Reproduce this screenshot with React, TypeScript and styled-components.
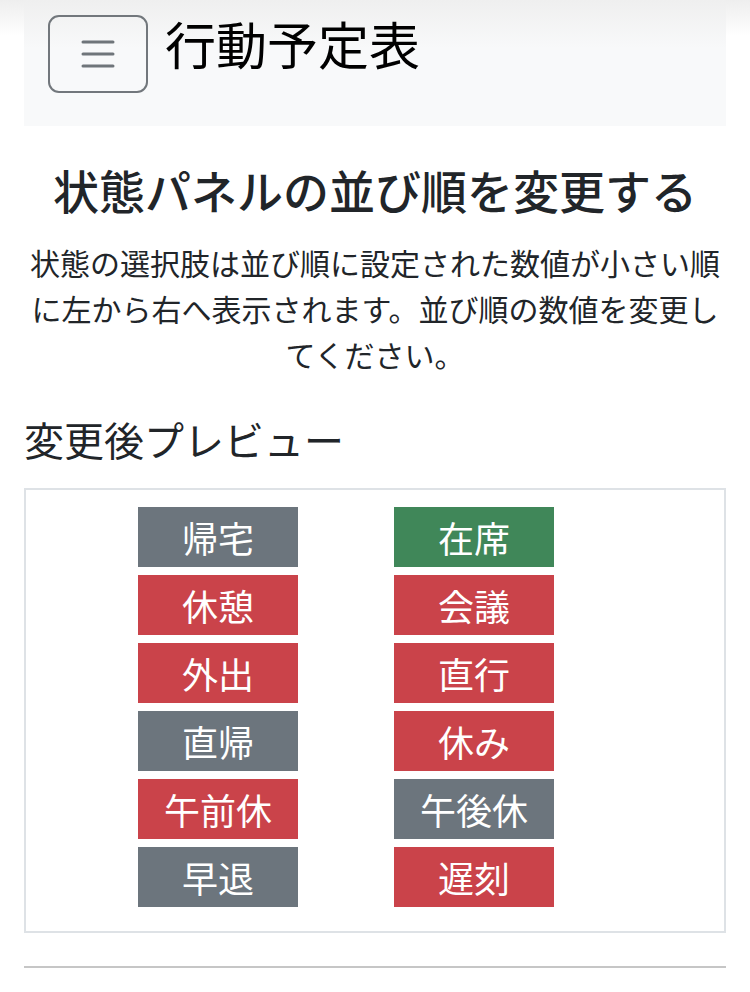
import styled, { createGlobalStyle } from "styled-components";

const GlobalStyle = createGlobalStyle`
  html, body {
    margin: 0;
    padding: 0;
  }
  body {
    background: linear-gradient(to bottom, #eeeeee 0, #ffffff 36px) no-repeat;
    color: #212529;
    font-family: "Noto Sans CJK JP", "Noto Sans", sans-serif;
  }
`;

type Variant = "secondary" | "danger" | "success";

const colors: Record<Variant, string> = {
  secondary: "#6c757d",
  danger: "#ca434a",
  success: "#408759",
};

const Page = styled.div`
  padding: 0 24px;
`;

const Navbar = styled.nav`
  display: flex;
  align-items: flex-start;
  gap: 17px;
  height: 126px;
  box-sizing: border-box;
  padding: 15px 24px 0;
  background: linear-gradient(to bottom, #efefef 0, #f8f9fa 48px);
`;

const Toggler = styled.button`
  display: flex;
  align-items: center;
  justify-content: center;
  width: 100px;
  height: 78px;
  padding: 0;
  background: transparent;
  border: 2px solid #72777c;
  border-radius: 11px;
`;

const Brand = styled.span`
  margin-top: -2px;
  font-size: 51px;
  line-height: 60px;
  color: #000;
`;

const Title = styled.h1`
  margin: 36px 0 0;
  font-size: 46px;
  line-height: 54px;
  font-weight: 500;
  text-align: center;
`;

const Lead = styled.p`
  margin: 23px 0 0;
  font-size: 30px;
  line-height: 46px;
  text-align: center;
`;

const SubTitle = styled.h2`
  margin: 38px 0 0;
  font-size: 40px;
  line-height: 48px;
  font-weight: 400;
`;

const PreviewBox = styled.div`
  margin-top: 25px;
  border: 2px solid #dee2e6;
  padding: 17px 0 16px;
`;

const Columns = styled.div`
  display: grid;
  grid-template-columns: 256px 256px;
  margin-left: 64px;
`;

const Column = styled.div`
  display: flex;
  flex-direction: column;
  align-items: center;
  gap: 8px;
  padding-bottom: 8px;
`;

const Badge = styled.div<{ $variant: Variant }>`
  width: 160px;
  height: 60px;
  display: flex;
  align-items: center;
  justify-content: center;
  background: ${(p) => colors[p.$variant]};
  color: #fff;
  font-size: 36px;
  line-height: 1;
`;

const Rule = styled.hr`
  margin: 33px 0 0;
  border: 0;
  border-top: 2px solid #c6c6c6;
`;

const left: [string, Variant][] = [
  ["帰宅", "secondary"],
  ["休憩", "danger"],
  ["外出", "danger"],
  ["直帰", "secondary"],
  ["午前休", "danger"],
  ["早退", "secondary"],
];

const right: [string, Variant][] = [
  ["在席", "success"],
  ["会議", "danger"],
  ["直行", "danger"],
  ["休み", "danger"],
  ["午後休", "secondary"],
  ["遅刻", "danger"],
];

const MenuIcon = () => (
  <svg width="34" height="28" viewBox="0 0 34 28">
    <g stroke="#6f757a" strokeWidth="3" strokeLinecap="round">
      <line x1="2" y1="2" x2="32" y2="2" />
      <line x1="2" y1="14" x2="32" y2="14" />
      <line x1="2" y1="26" x2="32" y2="26" />
    </g>
  </svg>
);

export default function App() {
  return (
    <>
      <GlobalStyle />
      <Page>
        <Navbar>
          <Toggler aria-label="menu">
            <MenuIcon />
          </Toggler>
          <Brand>行動予定表</Brand>
        </Navbar>
        <Title>状態パネルの並び順を変更する</Title>
        <Lead>
          状態の選択肢は並び順に設定された数値が小さい順に左から右へ表示されます。並び順の数値を変更してください。
        </Lead>
        <SubTitle>変更後プレビュー</SubTitle>
        <PreviewBox>
          <Columns>
            <Column>
              {left.map(([label, v]) => (
                <Badge key={label} $variant={v}>
                  {label}
                </Badge>
              ))}
            </Column>
            <Column>
              {right.map(([label, v]) => (
                <Badge key={label} $variant={v}>
                  {label}
                </Badge>
              ))}
            </Column>
          </Columns>
        </PreviewBox>
        <Rule />
      </Page>
    </>
  );
}
